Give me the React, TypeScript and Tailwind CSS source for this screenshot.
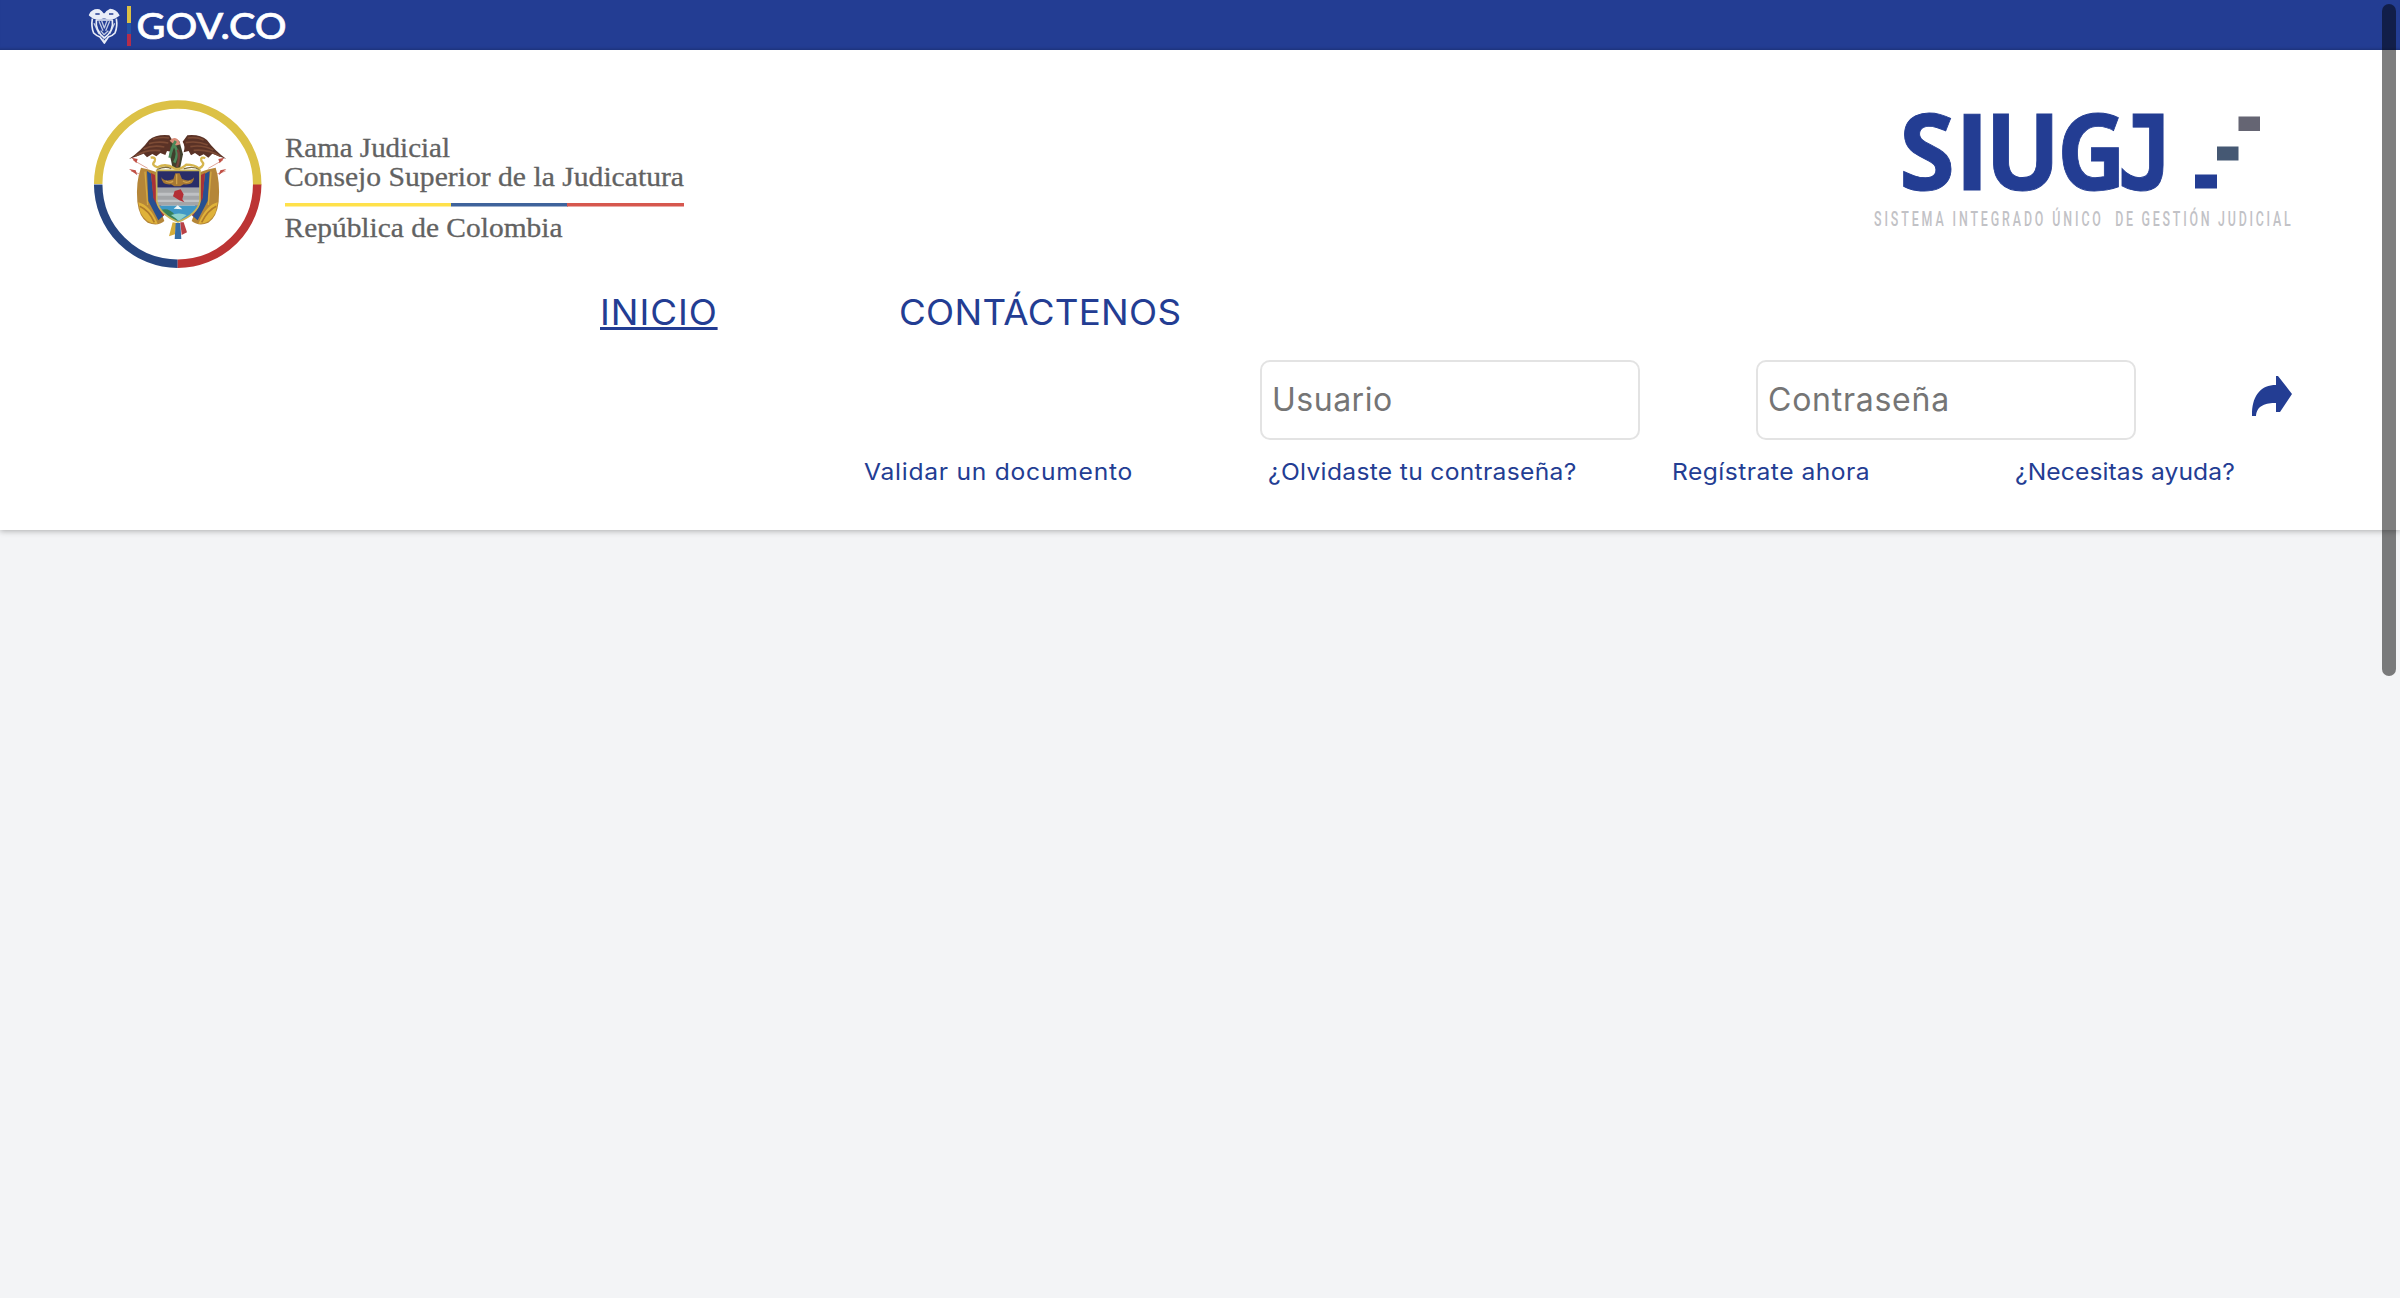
import type { ReactNode } from "react";

function GovLogo() {
  return (
    <svg className="h-[50px] w-[220px]" viewBox="80 0 220 50" role="img" aria-label="GOV.CO">
      <g transform="translate(85 0) scale(0.3333)" fill="none" stroke="#e9edf8" strokeWidth="5" strokeLinejoin="round">
        <path d="M14 45 Q22 28 42 30 Q50 35 54 42 L60 42 Q64 34 75 29 Q92 30 101 46 L88 54 Q72 58 61 53 L54 53 Q40 58 26 54Z" fill="#e9edf8" />
        <path d="M31 42 h13 M72 42 h13" stroke="#233d93" />
        <path d="M22 56 Q18 81 26 99 Q34 107 45 111 L58 129 L70 111 Q83 107 90 99 Q98 80 94 56 M34 60 Q30 92 58 114 Q87 92 82 60Z" />
        <path d="M42 64 L54 92 M50 62 L58 84 L66 62 M74 64 L62 92 M27 70 L42 102 M89 70 L74 102 M47 92 L57 104 L70 92 M53 116 L58 125 L64 116" strokeWidth="4" opacity=".8" />
      </g>
      <rect x="127" y="6" width="4" height="17" fill="#dcc044" />
      <rect x="127" y="23" width="4" height="11" fill="#2152a5" />
      <rect x="127" y="34" width="4" height="12" fill="#b42d4b" />
      <text x="136.5" y="39.3" fontFamily="Lato, sans-serif" fontWeight="500" fontSize="37" fill="#fff" stroke="#fff" strokeWidth=".7" textLength="150" lengthAdjust="spacingAndGlyphs">GOV.CO</text>
    </svg>
  );
}

function Arms() {
  return (
    <g transform="translate(125 125) scale(0.3333)">
      <path d="M48 128 Q70 132 96 142 L96 224 L118 288 Q98 306 68 293 Q42 276 37 230 Q32 170 48 128Z" fill="#b58638" />
      <path d="M272 128 Q248 132 224 142 L224 224 L200 288 Q222 306 250 293 Q276 276 281 230 Q286 170 272 128Z" fill="#b58638" />
      <path d="M40 232 Q75 240 98 296 Q64 298 46 262Z M278 232 Q244 240 220 296 Q256 298 272 262Z" fill="#dfb23a" />
      <path d="M44 244 Q72 256 88 292 M274 244 Q248 256 230 292" stroke="#b07b2a" strokeWidth="5" fill="none" />
      <path d="M66 138 L78 146 L86 218 L116 272 L100 286 L70 228Z M254 138 L240 146 L232 218 L202 272 L218 286 L248 228Z" fill="#274f91" />
      <path d="M78 144 L90 150 L96 218 L122 266 L114 274 L85 220Z M240 144 L228 150 L222 218 L198 266 L204 274 L233 220Z" fill="#a93138" />
      <path d="M60 140 L68 240 M258 140 L250 240" stroke="#d4aa43" strokeWidth="4" />
      <path d="M12 102 Q50 76 72 45 Q94 27 133 31 L146 52 Q134 66 138 80 L126 78 L121 90 L106 84 L94 94 L82 87 L66 97 L56 86 L36 94Z" fill="#5a3226" />
      <path d="M304 102 Q268 76 246 45 Q224 27 187 31 L173 50 Q182 64 176 82 L191 78 L198 91 L210 84 L224 94 L236 88 L250 98 L262 86 L282 94Z" fill="#5a3226" />
      <path d="M84 42 Q108 35 132 39 M72 56 Q99 48 130 54 M56 72 Q82 59 118 66 M32 92 Q67 72 106 77" stroke="#7d4b35" strokeWidth="5" fill="none" />
      <path d="M188 39 Q216 35 236 45 M182 53 Q218 47 248 60 M196 65 Q232 58 265 75 M206 76 Q252 72 286 94" stroke="#7d4b35" strokeWidth="5" fill="none" />
      <path d="M137 50 Q150 38 163 48 L174 88 L164 136 L143 130 L134 88Z" fill="#40402d" />
      <path d="M134 47 Q145 34 158 43 L167 58 L151 62Z" fill="#d98c78" />
      <path d="M152 48 Q140 68 134 98 M149 62 Q163 83 148 113" stroke="#4b895a" strokeWidth="8" fill="none" />
      <path d="M158 74 Q167 93 156 126" stroke="#76443a" strokeWidth="7" fill="none" />
      <path d="M77 98 Q94 95 89 109 Q77 121 98 127 Q122 113 148 130 Q164 137 184 119 Q208 119 222 130 Q243 121 229 107 Q226 94 241 99" fill="none" stroke="#d5b54d" strokeWidth="7" />
      <path d="M96 134 Q121 121 139 131 M176 132 Q205 121 224 135" fill="none" stroke="#806e3c" strokeWidth="4" />
      <path d="M24 105 L68 130 M18 138 L44 147 M294 105 L250 130 M302 138 L276 147" stroke="#e0a597" strokeWidth="3" />
      <path d="M20 98 L38 102 L34 115Z M12 132 L32 136 L37 151Z M298 98 L280 102 L284 115Z M304 132 L286 136 L281 151Z" fill="#c05047" />
      <clipPath id="shield">
        <path d="M95 136 H225 V228 Q218 267 159 291 Q104 268 95 228Z" />
      </clipPath>
      <g clipPath="url(#shield)">
        <path d="M90 130h140v58H90z" fill="#292d68" />
        <path d="M90 188h140v54H90z" fill="#a3a5a8" />
        <path d="M90 203h140v9H90z M90 224h140v7H90z" fill="#bfc1c4" />
        <path d="M90 242h140v55H90z" fill="#4098c6" />
        <path d="M96 260 Q128 242 150 270 L159 292 L115 279Z" fill="#388158" />
        <path d="M138 270 Q162 261 185 270 L162 287Z" fill="#8cd1cb" />
        <path d="M146 251 L158 241 L172 253Z" fill="#eef6f8" />
      </g>
      <path d="M109 156 Q116 172 145 163 L151 145 H164 L171 162 Q196 173 207 157 Q208 181 176 178 L166 184 H148 L138 178 Q109 180 109 156Z" fill="#a67833" />
      <path d="M155 148v30 M122 168q16 8 22 0 M174 168q10 8 22 0" stroke="#d2a34b" strokeWidth="4" fill="none" />
      <path d="M149 198 L167 193 L176 208 L172 223 L178 232 L163 226 L144 214Z" fill="#b32f36" />
      <path d="M95 136 H225 V228 Q218 267 159 291 Q104 268 95 228Z" fill="none" stroke="#c6b458" strokeWidth="5" />
      <path d="M143 292 L132 334 L150 328 L155 294Z" fill="#d5ad39" />
      <path d="M152 294 L149 342 H169 L166 294Z" fill="#356da6" />
      <path d="M166 292 L170 330 L186 322 L176 292Z" fill="#b94146" />
    </g>
  );
}

function JudicialLogo() {
  return (
    <svg className="h-[190px] w-[620px]" viewBox="80 90 620 190" role="img" aria-label="Rama Judicial">
      <g fill="none" strokeWidth="8.5">
        <path d="M98.2 184 A79.5 79.5 0 0 1 257.2 184 v1" stroke="#dcc146" />
        <path d="M98.2 184.5 A79.5 79.5 0 0 0 177.7 263.7" stroke="#27457f" />
        <path d="M257.2 184.5 A79.5 79.5 0 0 1 177.7 263.7" stroke="#bc3434" />
      </g>
      <Arms />
      <g fontFamily="'Liberation Serif', serif" fontSize="27.5" fill="#626262" stroke="#626262" strokeWidth=".3">
        <text x="285" y="156.8" textLength="165" lengthAdjust="spacingAndGlyphs">Rama Judicial</text>
        <text x="284" y="186" textLength="400" lengthAdjust="spacingAndGlyphs">Consejo Superior de la Judicatura</text>
        <text x="284.5" y="236.500" textLength="278" lengthAdjust="spacingAndGlyphs">República de Colombia</text>
      </g>
      <rect x="285" y="203" width="166" height="3.5" fill="#ffe14a" />
      <rect x="451" y="203" width="117" height="3.5" fill="#3f639b" />
      <rect x="567" y="203" width="117" height="3.5" fill="#d6574e" />
    </svg>
  );
}

function SiugjLogo() {
  return (
    <svg className="h-[160px] w-[450px]" viewBox="1860 90 450 160" role="img" aria-label="SIUGJ">
      <g fontFamily="'Open Sans', sans-serif" fontWeight="700" fontSize="106" fill="#233d93" stroke="#233d93" strokeWidth=".9">
        <text transform="translate(1899 189.5) scale(0.96 1)">S</text>
        <text transform="translate(1954.5 189.5)">I</text>
        <text transform="translate(1985 189.5) scale(0.94 1)">U</text>
        <text transform="translate(2057 189.5) scale(0.9 1)">G</text>
        <text transform="translate(2117 189.5) scale(0.9 1)" fontFamily="'DejaVu Sans Mono', monospace" fontSize="104">J</text>
      </g>
      <rect x="2195" y="174.5" width="22" height="14" fill="#233d93" />
      <rect x="2217" y="146.5" width="21.5" height="14" fill="#455873" />
      <rect x="2238.5" y="116.5" width="21.5" height="14.5" fill="#656573" />
      <g transform="translate(1874 225.5) scale(0.62 1)" fontFamily="Roboto, sans-serif" fontWeight="500" fontSize="20" fill="#c2c2c6">
        <text textLength="366" lengthAdjust="spacing">SISTEMA INTEGRADO ÚNICO</text>
        <text x="389" textLength="283" lengthAdjust="spacing">DE GESTIÓN JUDICIAL</text>
      </g>
    </svg>
  );
}

function HelpLink({ slot, tracking, children }: { slot: string; tracking: string; children: ReactNode }) {
  return (
    <div className={`text-[23px] leading-8 ${slot}`}>
      <a className={`inline-block origin-left scale-x-107 whitespace-nowrap ${tracking}`}>{children}</a>
    </div>
  );
}

const field =
  "h-20 w-[380px] rounded-[10px] border-2 border-[#e3e3e3] bg-white pl-[10px] pb-0.5 text-[32px] placeholder-[#757575] outline-none";

export default function App() {
  return (
    <div className="relative h-[1298px] w-full overflow-hidden bg-[#f3f4f6] font-['Inter',sans-serif] text-[#233d93]">
      <header className="h-[530px] bg-white shadow-[0_1px_6px_rgba(0,0,0,0.3)]">
        <div className="h-[50px] bg-[#233d93] pl-20 shadow-[inset_0_-3px_3px_-2px_rgba(0,0,0,0.2)]">
          <GovLogo />
        </div>
        <div className="flex h-[240px] items-start justify-between pt-10 pr-[90px] pl-20">
          <JudicialLogo />
          <SiugjLogo />
        </div>
        <nav className="flex h-[70px] pl-[600px] text-[35px] leading-[44px]">
          <div className="w-[299px]">
            <a className="inline-block h-10 origin-left scale-x-105 border-b-3 border-[#233d93] tracking-[0.9px]">INICIO</a>
          </div>
          <a className="inline-block origin-left scale-x-105 tracking-[0.25px]">CONTÁCTENOS</a>
        </nav>
        <form className="flex h-20 pl-[1260px]">
          <input className={`${field} tracking-[0.5px]`} placeholder="Usuario" />
          <input className={`${field} ml-[116px] tracking-[0.75px]`} placeholder="Contraseña" type="text" />
          <svg className="mt-4 ml-[116px] h-10 w-10" viewBox="0 0 40 40" fill="#233d93">
            <path d="M24 0 L26 0 L40 18 L28 36 L24 36 L24 27 C14 27 5 29 4 40 L0 40 L0 36 C1 19 9 9 24 9 Z" />
          </svg>
        </form>
        <div className="flex pt-4 pl-[864px]">
          <HelpLink slot="w-[404px]" tracking="tracking-[0.7px]">Validar un documento</HelpLink>
          <HelpLink slot="w-[404px]" tracking="tracking-[0.3px]">¿Olvidaste tu contraseña?</HelpLink>
          <HelpLink slot="w-[343px]" tracking="tracking-[0.45px]">Regístrate ahora</HelpLink>
          <HelpLink slot="w-[300px]" tracking="tracking-[0.1px]">¿Necesitas ayuda?</HelpLink>
        </div>
      </header>
      <div className="absolute top-1 right-1 h-[672px] w-3.5 rounded-full bg-black/50" />
    </div>
  );
}
